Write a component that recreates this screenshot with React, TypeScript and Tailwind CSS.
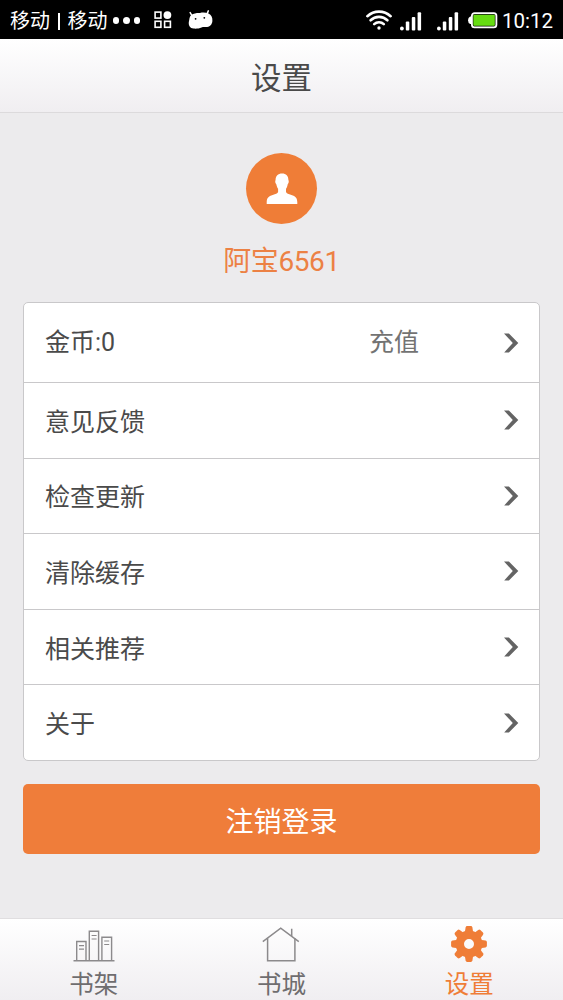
import React, { useState } from 'react';
import clsx from 'clsx';

type TabKey = 'shelf' | 'store' | 'settings';

const MENU_ITEMS = ['意见反馈', '检查更新', '清除缓存', '相关推荐', '关于'];

function SignalIcon() {
  return (
    <svg width="22" height="19" viewBox="0 0 22 19" fill="#fff">
      <circle cx="1.9" cy="16.5" r="1.9" />
      <rect x="5.8" y="9.5" width="3.5" height="9" rx="1" />
      <rect x="11.8" y="5" width="3.5" height="13.5" rx="1" />
      <rect x="17.6" y="0.2" width="3.5" height="18.3" rx="1" />
    </svg>
  );
}

function WifiIcon() {
  return (
    <svg width="26" height="20" viewBox="0 0 26 20" fill="none" stroke="#fff" strokeWidth="2.6" strokeLinecap="round">
      <path d="M1.4 6.2a17 17 0 0 1 23.2 0" />
      <path d="M4.6 10.3a12 12 0 0 1 16.8 0" />
      <path d="M8.2 14.2a6.8 6.8 0 0 1 9.6 0" />
      <circle cx="13" cy="18" r="1.7" fill="#fff" stroke="none" />
    </svg>
  );
}

function BatteryIcon() {
  return (
    <svg width="30" height="17" viewBox="0 0 30 17">
      <path d="M4 4.500H2.200Q0 5.500 0 8.300t2.200 3.800H4z" fill="#fff" />
      <rect x="3.9" y="1.1" width="24.5" height="14.3" rx="2.6" fill="#111" stroke="#fff" strokeWidth="1.8" />
      <rect x="5.4" y="2.7" width="21.4" height="11" rx="0.8" fill="#66dc12" />
    </svg>
  );
}

function AppsIcon() {
  return (
    <svg width="18" height="18" viewBox="0 0 18 18" fill="none" stroke="#fff" strokeWidth="1.6">
      <rect x="1.1" y="1.1" width="5.8" height="6" />
      <rect x="1.1" y="10.3" width="5.8" height="6" />
      <rect x="10.6" y="10.3" width="5.8" height="6" />
      <circle cx="13.4" cy="4.1" r="3.9" fill="#fff" stroke="none" />
    </svg>
  );
}

function MascotIcon() {
  return (
    <svg width="25" height="19" viewBox="0 0 25 19">
      <path d="M2.200 2.600l2.200 4M20.300 .9l-1.600 4" stroke="#fff" strokeWidth="1.5" strokeLinecap="round" />
      <path
        d="M3.200 5C6 3 9 2.800 12 2.900C15 2.400 18 2.500 20.500 3.500C23.400 4.800 24.600 7.600 24.400 11C24 15 21.500 17.200 17.500 17.100C15.800 17.100 14.800 17 13.500 17.500C11 18.700 8 18.800 5.500 18.600C2 18.300 .4 15.500 .8 12C1.500 9.600 1.200 6.700 3.200 5Z"
        fill="#fff"
      />
      <circle cx="7.6" cy="8.8" r="0.9" fill="#000" />
      <circle cx="16.300" cy="7.800" r="0.9" fill="#000" />
    </svg>
  );
}

function ChevronIcon() {
  return (
    <svg width="15" height="20" viewBox="0 0 15 20" fill="#646464">
      <path d="M0 .4h4.900L14.300 9.900 4.900 19.400H.2L8.800 9.900z" />
    </svg>
  );
}

function UserIcon() {
  return (
    <svg width="32" height="32" viewBox="0 0 32 32" fill="#fff">
      <path d="M16.100 .4c4 0 6.400 2.500 6.300 6.600 .7 1 .4 3.300-.7 4.200-.4 2.100-.9 3.500-1.700 4.600v3.300c.7 1.700 2.300 2.100 5.400 2.900 4.200 1.200 5.700 3 5.900 6.900v2.100H.7v-2.100c.2-3.900 1.800-5.700 6-6.900 3-.8 4.700-1.200 5.400-2.900v-3.300c-.8-1.100-1.300-2.500-1.800-4.600-1.100-.9-1.400-3.200-.7-4.200C9.400 3 12 .4 16.100 .4z" />
    </svg>
  );
}

function ShelfIcon() {
  return (
    <svg width="42" height="38" viewBox="0 0 42 38" fill="none" stroke="#8c8a8c" strokeWidth="1.4">
      <path d="M.5 35.800h41" />
      <path d="M3.700 35.500v-19h9.300v19M16.300 35.500V6.300h9.300v29.200M28.900 35.500V12.200h9.700v23.300" />
      <path d="M6 20.700h5M6 24.200h5M18.600 10.500h5M18.600 14h5M31.200 16h5M31.200 19.500h5" strokeWidth="1.200" />
    </svg>
  );
}

function StoreIcon() {
  return (
    <svg width="38" height="38" viewBox="0 0 38 38" fill="none" stroke="#8c8a8c" strokeWidth="1.5">
      <path d="M.8 16.700L18.700 3.200l18.100 13.500" />
      <path d="M5.600 13.200v22.600h27.300V13.200M29.700 11V3.700" />
    </svg>
  );
}

function GearIcon() {
  return (
    <svg width="38" height="38" viewBox="-19 -19 38 38" fill="#ef7d37">
      <circle r="9.200" fill="none" stroke="#ef7d37" strokeWidth="8.400" />
      {[0, 45, 90, 135, 180, 225, 270, 315].map((angle) => (
        <path
          key={angle}
          d="M-4.300 -11L-3.400 -16.500Q-3.100 -17.900 -1.800 -17.900H1.800Q3.100 -17.900 3.400 -16.500L4.300 -11Z"
          transform={`rotate(${angle})`}
        />
      ))}
    </svg>
  );
}

function StatusBar() {
  return (
    <div className="flex h-[39px] items-center bg-black pl-[10px] pr-[10px] text-[20px] leading-none text-white">
      <span className="mt-[2px] text-[20px]">移动</span>
      <span className="mx-[8px] mt-[3px] h-[17px] w-[1.5px] bg-white" />
      <span className="mt-[2px] text-[20px]">移动</span>
      <div className="ml-[5px] mt-[2px] flex gap-1">
        <span className="size-[6.5px] rounded-full bg-white" />
        <span className="size-[6.5px] rounded-full bg-white" />
        <span className="size-[6.5px] rounded-full bg-white" />
      </div>
      <div className="ml-[14px]">
        <AppsIcon />
      </div>
      <div className="ml-[16px]">
        <MascotIcon />
      </div>
      <div className="ml-auto flex items-center">
        <WifiIcon />
        <div className="ml-2 mt-[3px] flex gap-[15px]">
          <SignalIcon />
          <SignalIcon />
        </div>
        <div className="ml-[9px] mt-[2px]">
          <BatteryIcon />
        </div>
        <span className="ml-[4px] mt-[4px] text-[20.5px]">10:12</span>
      </div>
    </div>
  );
}

function App() {
  const [tab, setTab] = useState<TabKey>('settings');

  const tabs = [
    { key: 'shelf' as TabKey, label: '书架', icon: <ShelfIcon /> },
    { key: 'store' as TabKey, label: '书城', icon: <StoreIcon /> },
    { key: 'settings' as TabKey, label: '设置', icon: <GearIcon /> }
  ];

  return (
    <div className="flex h-[1000px] w-[563px] flex-col overflow-hidden bg-[#ecebed] font-[Roboto,'Noto_Sans_CJK_SC',sans-serif] text-[#4a4a4a]">
      <StatusBar />
      <header className="flex h-[74px] items-center justify-center border-b border-[#dcdadc] bg-linear-to-b from-white to-[#f0eef1] pt-[8px]">
        <h1 className="text-[30.5px] leading-none">设置</h1>
      </header>

      <main className="flex flex-1 flex-col px-[23px] pt-[40px]">
        <div className="flex flex-col items-center">
          <div className="flex size-[71px] items-center justify-center rounded-full bg-[#ef7d37]">
            <UserIcon />
          </div>
          <p className="mt-[24px] h-[28px] text-[28px] leading-[28px] tracking-[-0.4px] text-[#ec8144]">阿宝6561</p>
        </div>

        {/* 设置列表 */}
        <ul className="mt-[26px] h-[459px] rounded-[5px] border border-[#c9c8ca] bg-white text-[25px] leading-none">
          <li className="flex h-[79px] items-center pl-[21px] pr-[20px]">
            <span>金币:0</span>
            <span className="ml-auto mr-[85px] text-[#737373]">充值</span>
            <ChevronIcon />
          </li>
          {MENU_ITEMS.map((item) => (
            <li
              key={item}
              className="flex h-[75.6px] items-center justify-between border-t border-[#c9c8ca] pl-[21px] pr-[20px]"
            >
              <span className="pt-[4px]">{item}</span>
              <ChevronIcon />
            </li>
          ))}
        </ul>

        <button className="mt-[23px] h-[70px] rounded-[5px] bg-[#ef7d3a] pt-[7px] text-[28px] leading-none text-white">
          注销登录
        </button>
      </main>

      <nav className="grid h-[82px] grid-cols-3 border-t border-[#e0dee0] bg-linear-to-b from-white to-[#f0eef1]">
        {tabs.map(({ key, label, icon }) => (
          <button
            key={key}
            onClick={() => setTab(key)}
            className={clsx(
              'flex flex-col items-center pt-[6px] text-[24.5px] leading-none',
              tab === key ? 'text-[#ef7d37]' : 'text-[#6f6d6f]'
            )}
          >
            {icon}
            <span className="mt-[10px]">{label}</span>
          </button>
        ))}
      </nav>
    </div>
  );
}

export default App;
